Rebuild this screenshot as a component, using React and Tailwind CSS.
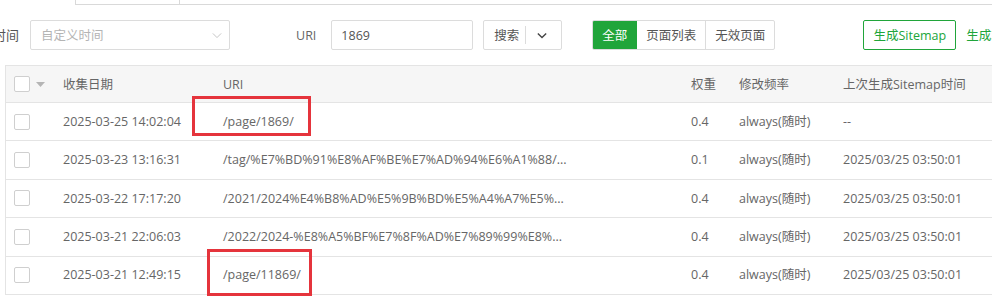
import React from "react";

const font = { fontFamily: '"Open Sans", "Noto Sans CJK SC", sans-serif' };

function Check() {
  return <div className="w-4 h-4 border border-[#cfcfcf] rounded-[2px] bg-white" />;
}

const rows = [
  ["2025-03-25 14:02:04", "/page/1869/", "0.4", "always(随时)", "--"],
  ["2025-03-23 13:16:31", "/tag/%E7%BD%91%E8%AF%BE%E7%AD%94%E6%A1%88/...", "0.1", "always(随时)", "2025/03/25 03:50:01"],
  ["2025-03-22 17:17:20", "/2021/2024%E4%B8%AD%E5%9B%BD%E5%A4%A7%E5%...", "0.4", "always(随时)", "2025/03/25 03:50:01"],
  ["2025-03-21 22:06:03", "/2022/2024-%E8%A5%BF%E7%8F%AD%E7%89%99%E8%...", "0.4", "always(随时)", "2025/03/25 03:50:01"],
  ["2025-03-21 12:49:15", "/page/11869/", "0.4", "always(随时)", "2025/03/25 03:50:01"],
];

function Chevron({ className, strokeWidth = 1.2 }) {
  return (
    <svg className={className} viewBox="0 0 12 8" fill="none" stroke="currentColor" strokeWidth={strokeWidth}>
      <path d="M1 1.5 L6 6.5 L11 1.5" />
    </svg>
  );
}

export default function App() {
  return (
    <div className="relative w-[992px] h-[305px] overflow-hidden bg-white text-[12.5px] text-[#666]" style={font}>
      {/* top tab remnant */}
      <div className="h-[5px] ml-[75px] border-b border-[#d9d9d9] flex">
        <div className="w-[105px] h-full border-l border-r border-[#d9d9d9]" />
      </div>

      {/* filter row */}
      <div className="flex items-center h-[30px] mt-[15px] ml-[-7px] whitespace-nowrap">
        <span className="shrink-0 pt-[2px] text-[13px] text-[#555]">时间</span>
        <div className="shrink-0 ml-[11px] w-[200px] h-[30px] border border-[#dcdcdc] rounded-[2px] flex items-center justify-between pl-[10px] pr-[7px]">
          <span className="pt-[2px] text-[#b4b4b4]">自定义时间</span>
          <Chevron className="w-[10px] h-[7px] text-[#bbb]" strokeWidth={1} />
        </div>
        <span className="shrink-0 pt-[2px] ml-[66px] text-[#666]">URI</span>
        <div className="shrink-0 ml-[15px] w-[142px] h-[30px] border border-[#dcdcdc] rounded-[2px] flex items-center pl-[9px] pt-[2px] text-[#555]">
          1869
        </div>
        <div className="shrink-0 ml-[10px] w-[79px] h-[30px] border border-[#dcdcdc] rounded-[2px] flex items-center text-[#555]">
          <span className="pt-[2px] pl-[10px] pr-[6px]">搜索</span>
          <div className="w-px h-[18px] bg-[#dcdcdc]" />
          <Chevron className="ml-[11px] w-[10px] h-[7px] text-[#444]" strokeWidth={1.6} />
        </div>
        <div className="shrink-0 ml-[30px] flex h-[30px] border border-[#dcdcdc] rounded-[2px] overflow-hidden">
          <div className="w-[45px] -my-px -ml-px pt-[2px] bg-[#20a53a] text-white flex items-center justify-center rounded-l-[2px]">全部</div>
          <div className="w-[69px] pt-[2px] flex items-center justify-center text-[#555] border-r border-[#dcdcdc]">页面列表</div>
          <div className="w-[68px] pt-[2px] flex items-center justify-center text-[#555]">无效页面</div>
        </div>
        <div className="shrink-0 ml-[88px] w-[93px] h-[30px] pt-[2px] border border-[#20a53a] rounded-[2px] flex items-center justify-center text-[#20a53a]">
          生成Sitemap
        </div>
        <span className="shrink-0 pt-[2px] ml-[10px] text-[#20a53a]">生成站点地图</span>
      </div>

      {/* table */}
      <div className="mt-[15px] ml-[5px] border-l border-[#e4e4e4] whitespace-nowrap">
        <div className="flex items-center h-[38px] bg-[#f6f6f6] border-t border-b border-[#e4e4e4]">
          <div className="shrink-0 w-[47px] pl-[8px] flex items-center">
            <Check />
            <svg className="ml-[6px] w-[9px] h-[5px]" viewBox="0 0 9 5"><path d="M0 0 H9 L4.5 5 Z" fill="#b5b5b5" /></svg>
          </div>
          <div className="shrink-0 w-[160px] pl-[10px] pt-[2px]">收集日期</div>
          <div className="shrink-0 w-[468px] pl-[10px] pt-[2px]">URI</div>
          <div className="shrink-0 w-[48px] pl-[10px] pt-[2px]">权重</div>
          <div className="shrink-0 w-[104px] pl-[10px] pt-[2px]">修改频率</div>
          <div className="flex-1 pl-[10px] pt-[2px]">上次生成Sitemap时间</div>
        </div>
        {rows.map((r, i) => (
          <div key={i} className="flex items-center h-[38.4px] border-b border-[#e4e4e4]">
            <div className="shrink-0 w-[47px] pl-[8px]"><Check /></div>
            <div className="shrink-0 w-[160px] pl-[10px] pt-[1px]">{r[0]}</div>
            <div className="shrink-0 w-[468px] pl-[10px] pt-[1px]">{r[1]}</div>
            <div className="shrink-0 w-[48px] pl-[10px] pt-[1px]">{r[2]}</div>
            <div className="shrink-0 w-[104px] pl-[10px] pt-[1px]">{r[3]}</div>
            <div className="flex-1 pl-[10px] pt-[1px]">{r[4]}</div>
          </div>
        ))}
      </div>

      {/* red annotation boxes */}
      <div className="absolute left-[192px] top-[96px] w-[119px] h-[40px] border-[3px] border-[#e5343c]" />
      <div className="absolute left-[207px] top-[249px] w-[105px] h-[47px] border-[3px] border-[#e5343c]" />
    </div>
  );
}
